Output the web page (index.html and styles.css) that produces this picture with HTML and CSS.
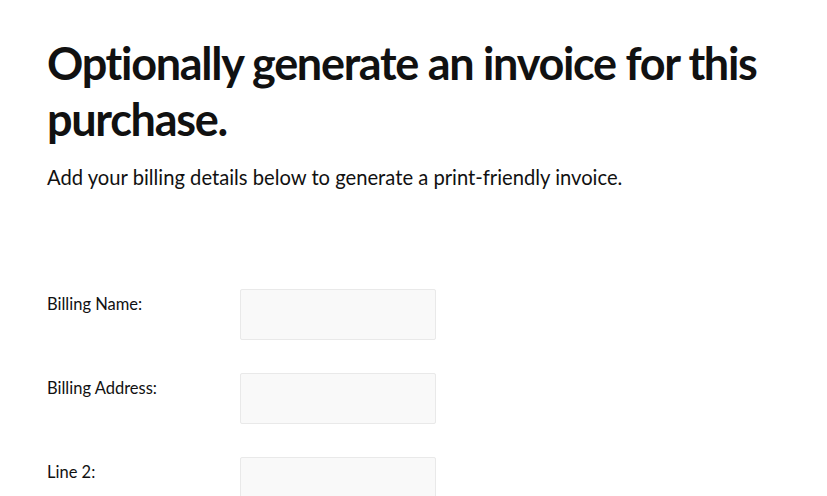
FILE: index.html
```html
<!DOCTYPE html>
<html lang="en">
<head>
  <meta charset="UTF-8" />
  <title>Invoice</title>
  <link rel="stylesheet" href="styles.css">
</head>
<body>
  <div class="page">
    <h1>Optionally generate an invoice for this purchase.</h1>
    <p class="lead">Add your billing details below to generate a print-friendly invoice.</p>

    <form class="billing">
      <div class="row">
        <label for="name">Billing Name:</label>
        <input type="text" id="name" />
      </div>
      <div class="row">
        <label for="address">Billing Address:</label>
        <input type="text" id="address" />
      </div>
      <div class="row">
        <label for="line2">Line 2:</label>
        <input type="text" id="line2" />
      </div>
    </form>
  </div>
</body>
</html>
```

FILE: styles.css
```css
body {
  margin: 0;
  font-family: Lato, "Open Sans", sans-serif;
  color: #111;
  background: #fff;
}
.page {
  padding: 35px 47px 0;
}
h1 {
  margin: 0;
  font-size: 45px;
  line-height: 56px;
  font-weight: 700;
  letter-spacing: -1.3px;
}
.lead {
  margin: 17px 0 0;
  font-size: 20.2px;
  line-height: 26px;
}
.billing {
  margin-top: 99px;
}
.row {
  display: flex;
  align-items: flex-start;
  margin-bottom: 33px;
}
.row label {
  width: 193px;
  font-size: 16.5px;
  padding-top: 5px;
}
.row input {
  width: 196px;
  height: 51px;
  box-sizing: border-box;
  border: 1px solid #e9e9e9;
  border-radius: 2px;
  background: #f9f9f9;
}
```
